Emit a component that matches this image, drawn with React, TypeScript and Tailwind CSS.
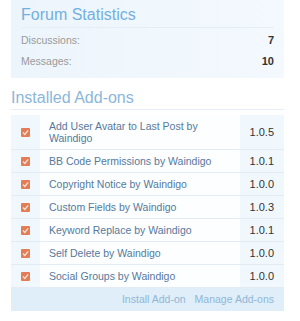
const addons = [
  { name: "Add User Avatar to Last Post by Waindigo", version: "1.0.5" },
  { name: "BB Code Permissions by Waindigo", version: "1.0.1" },
  { name: "Copyright Notice by Waindigo", version: "1.0.0" },
  { name: "Custom Fields by Waindigo", version: "1.0.3" },
  { name: "Keyword Replace by Waindigo", version: "1.0.1" },
  { name: "Self Delete by Waindigo", version: "1.0.0" },
  { name: "Social Groups by Waindigo", version: "1.0.0" },
];

function Check() {
  return (
    <svg width="9" height="9" viewBox="0 0 9 9">
      <rect x="0" y="0" width="9" height="9" rx="1" fill="#e27d55" />
      <path d="M2 4.6 L3.8 6.4 L7.2 2.4" stroke="#fbe3d6" strokeWidth="1.4" fill="none" />
    </svg>
  );
}

export default function App() {
  return (
    <div className="w-[300px] h-[321px] bg-white font-['Liberation_Sans',Arial,sans-serif] text-[10.5px]">
      <div className="pl-[11px] pr-[16px]">
        {/* Forum Statistics */}
        <div className="bg-gradient-to-r from-[#edf5fc] to-[#f3f9fe] px-[10px] pt-[5px] pb-[6px]">
          <h3 className="text-[16px] leading-[20px] text-[#73afe0] pb-[2px] border-b border-[#e5eef7]">
            Forum Statistics
          </h3>
          <div className="flex justify-between items-center h-[21px] mt-[2px]">
            <span className="text-[#9a9a9a]">Discussions:</span>
            <span className="text-[#333] font-bold text-[11px]">7</span>
          </div>
          <div className="flex justify-between items-center h-[21px]">
            <span className="text-[#9a9a9a]">Messages:</span>
            <span className="text-[#333] font-bold text-[11px]">10</span>
          </div>
        </div>

        {/* Installed Add-ons */}
        <h3 className="mt-[10px] text-[16px] leading-[20px] text-[#8bb6da] pb-[1px] border-b border-[#e5eef7]">
          Installed Add-ons
        </h3>
        <div className="mt-[5px]">
          {addons.map((a, i) => (
            <div
              key={a.name}
              className={`flex ${i > 0 ? "border-t border-[#e3ecf5]" : ""}`}
            >
              <div className="w-[29px] bg-[#f0f7fd] flex items-center justify-center shrink-0">
                <Check />
              </div>
              <div className="flex-1 bg-[#fcfeff] pl-[9px] pr-[4px] py-[5px] text-[#56799c] leading-[12px]">
                {a.name}
              </div>
              <div className="w-[44px] bg-[#f0f7fd] flex items-center justify-end pr-[10px] text-[#333] text-[11px] shrink-0">
                {a.version}
              </div>
            </div>
          ))}
          <div className="bg-[#e0eef9] h-[24px] flex items-center justify-end gap-[9px] pr-[10px] text-[#90b6d6] border-t border-[#e3ecf5]">
            <span>Install Add-on</span>
            <span>Manage Add-ons</span>
          </div>
        </div>
      </div>
    </div>
  );
}
